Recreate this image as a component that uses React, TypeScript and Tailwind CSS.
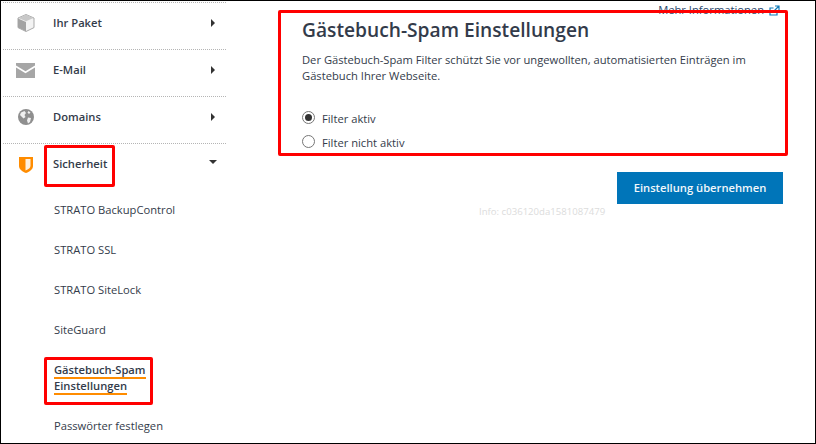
import type { ReactNode } from "react";

function PackageIcon() {
  return (
    <svg width="18" height="18" viewBox="0 0 18 18">
      <path d="M9 .5 17 4v9.600L9 17.500 1 13.600V4z" fill="#f3f3f3" stroke="#a9a9a9" strokeWidth="1" />
      <path d="M9 .8 16.500 4 9 7.200 1.500 4z" fill="#c8c8c8" />
      <path d="M1 4.500v9l8 3.800V8z" fill="#a3a3a3" />
    </svg>
  );
}

function MailIcon() {
  return (
    <svg width="19" height="15" viewBox="0 0 19 15">
      <path d="M0 0h19v2.600l-9.500 5.600L0 2.600z" fill="#a6a6a6" />
      <path d="M0 4.600l9.500 5.600L19 4.600V15H0z" fill="#a6a6a6" />
    </svg>
  );
}

function GlobeIcon() {
  return (
    <svg width="16" height="16" viewBox="0 0 16 16">
      <circle cx="8" cy="8" r="8" fill="#8f8f8f" />
      <path d="M3 3.500 6.500 2 8 4 6.500 6 7.500 8 5.500 9.500 3.500 7.500 2 6zM10 8.500l3 .5-1 4-2 1.500-1-3zM10.500 2l2 1.500L11 5 9.500 3.500z" fill="#f0f0f0" />
    </svg>
  );
}

function ShieldIcon() {
  return (
    <svg width="14" height="16" viewBox="0 0 14 16">
      <path d="M0 0h14v9c0 3-3 5.500-7 7-4-1.500-7-4-7-7z" fill="#ff8c00" />
      <path d="M6.500 2H11.500v7c0 1.800-2 3.200-5 4.600z" fill="#fdf1e2" />
    </svg>
  );
}

function NavRow({ icon, label, open, last }: { icon: ReactNode; label: string; open?: boolean; last?: boolean }) {
  return (
    <div className={last ? "flex h-[47px] items-center pb-[6px]" : "flex h-[47px] items-center border-b border-dotted border-[#b5b5b5] pb-[6px]"}>
      <div className="flex w-[50px] justify-center pr-[5px]">{icon}</div>
      <span className="text-[11.2px] font-semibold text-[#333b4a]">{label}</span>
      <div className="ml-auto mr-[10px] flex w-[6px] justify-center">
        {open ? (
          <div className="mb-[5px] h-0 w-0 border-x-[4px] border-t-[4px] border-x-transparent border-t-[#333]" />
        ) : (
          <div className="h-0 w-0 border-y-[4px] border-l-[4px] border-y-transparent border-l-[#333]" />
        )}
      </div>
    </div>
  );
}

const subItems = ["STRATO BackupControl", "STRATO SSL", "STRATO SiteLock", "SiteGuard"];

export default function App() {
  return (
    <div className="relative h-[444px] w-[816px] overflow-hidden border border-black bg-white font-['Open_Sans',sans-serif] text-[#333b4a]">
      <div className="flex">
        {/* Sidebar */}
        <div className="w-[225px] shrink-0 pl-[2px] pt-[1px]">
          <div className="border-t border-dotted border-[#b5b5b5]">
            <NavRow icon={<PackageIcon />} label="Ihr Paket" />
            <NavRow icon={<MailIcon />} label="E-Mail" />
            <NavRow icon={<GlobeIcon />} label="Domains" />
            <NavRow icon={<ShieldIcon />} label="Sicherheit" open last />
          </div>
          <div className="flex flex-col pl-[51px] pt-[11px] text-[11.2px]">
            {subItems.map((item) => (
              <div key={item} className="h-[40px] leading-[16px]">{item}</div>
            ))}
            <div className="h-[56px] pt-[1px] font-semibold leading-[16px]">
              <span className="block w-fit border-b-2 border-[#ff8c00] leading-[14px]">Gästebuch-Spam</span>
              <span className="block w-fit border-b-2 border-[#ff8c00] leading-[14px]">Einstellungen</span>
            </div>
            <div className="leading-[16px]">Passwörter festlegen</div>
          </div>
        </div>

        {/* Content */}
        <div className="relative flex-1 pl-[76px] pr-[31px]">
          <div className="flex justify-end pr-[12px] pt-[1px] text-[11.2px] leading-[16px] text-[#2c4a6e]">
            <span className="flex items-center gap-[5px]">
              Mehr Informationen
              <svg width="11" height="11" viewBox="0 0 11 11" fill="none" stroke="#0f7ab8" strokeWidth="1.200">
                <path d="M8 6.500V10H1V3h3.500M6 1h4v4M10 1 5 6" />
              </svg>
            </span>
          </div>
          <h1 className="mt-[-1px] text-[19.2px] font-semibold leading-[26px] text-[#333b4a]">Gästebuch-Spam Einstellungen</h1>
          <p className="mt-[9px] w-[490px] text-[11.2px] leading-[16px]">
            Der Gästebuch-Spam Filter schützt Sie vor ungewollten, automatisierten Einträgen im Gästebuch Ihrer Webseite.
          </p>
          <div className="mt-[24px] flex flex-col gap-[5px] text-[11.2px] leading-[16px]">
            <label className="flex items-center gap-[7px]">
              <span className="flex h-[13px] w-[13px] items-center justify-center rounded-full border border-[#767676]">
                <span className="h-[7px] w-[7px] rounded-full bg-[#333]" />
              </span>
              <span className="pt-[3px]">Filter aktiv</span>
            </label>
            <label className="flex items-center gap-[7px]">
              <span className="h-[13px] w-[13px] rounded-full border border-[#767676]" />
              <span className="pt-[3px]">Filter nicht aktiv</span>
            </label>
          </div>
          <div className="mt-[21px] flex justify-end pr-[9px]">
            <button className="h-[32px] w-[166px] bg-[#0075b9] text-[11.2px] font-semibold text-[#f2f8fb]">Einstellung übernehmen</button>
          </div>
          <div className="mt-[1px] pl-[177px] text-[9.600px] leading-[14px] text-[#dcdcdc]">Info: c036120da1581087479</div>
        </div>
      </div>

      {/* Red annotation boxes */}
      <div className="absolute left-[277px] top-[9px] h-[146px] w-[510px] rounded-[2px] border-[3px] border-[#ff0000]" />
      <div className="absolute left-[43px] top-[144px] h-[42px] w-[71px] rounded-[2px] border-[3px] border-[#ff0000]" />
      <div className="absolute left-[43px] top-[356px] h-[48px] w-[109px] rounded-[2px] border-[3px] border-[#ff0000]" />
    </div>
  );
}
